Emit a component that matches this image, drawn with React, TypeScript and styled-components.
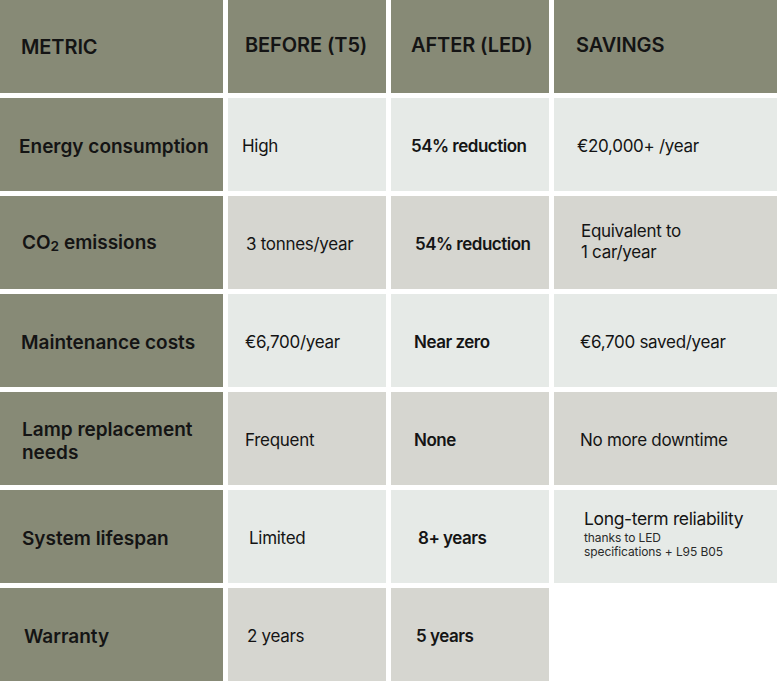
import React from 'react'
import styled, { createGlobalStyle } from 'styled-components'

const Colors = {
  Olive: '#878a76',
  Light: '#e6eae7',
  Gray: '#d6d6d0',
  Ink: '#141414',
}

type Tone = 'head' | 'light' | 'gray'

const toneColor: Record<Tone, string> = {
  head: Colors.Olive,
  light: Colors.Light,
  gray: Colors.Gray,
}

const GlobalStyle = createGlobalStyle`
  body {
    margin: 0;
    background: #ffffff;
    font-family: Inter, "Liberation Sans", sans-serif;
    color: ${Colors.Ink};
  }
`

const Table = styled.div`
  display: grid;
  grid-template-columns: 223px 158px 158px 223px;
  grid-auto-rows: 93px;
  column-gap: 5px;
  row-gap: 5px;
  width: 777px;
`

const Cell = styled.div<{ $tone: Tone; $pl: number; $pt?: number; $strong?: boolean }>`
  display: flex;
  align-items: center;
  box-sizing: border-box;
  padding-left: ${(p) => p.$pl}px;
  padding-top: ${(p) => p.$pt ?? 4}px;
  padding-right: 8px;
  background: ${(p) => toneColor[p.$tone]};
  font-size: 17px;
  line-height: 21px;
  font-weight: ${(p) => (p.$strong ? 600 : 400)};
  letter-spacing: ${(p) => (p.$strong ? '-0.5px' : '-0.3px')};
`

const HeadCell = styled(Cell).attrs({ $tone: 'head' as Tone })`
  font-size: 20px;
  font-weight: 600;
  letter-spacing: -0.1px;
  padding-bottom: 2px;
`

const LabelCell = styled(Cell).attrs({ $tone: 'head' as Tone, $strong: true })`
  font-size: 19px;
  line-height: 23px;
  letter-spacing: 0;
`

const Empty = styled.div`
  background: transparent;
`

const Text = styled.span``

const Sub = styled.span`
  font-size: 0.72em;
  vertical-align: -0.15em;
`

const Stack = styled.div<{ $lift: number; $gap: number }>`
  display: flex;
  flex-direction: column;
  gap: ${(p) => p.$gap}px;
  margin-bottom: ${(p) => p.$lift}px;
`

const Lead = styled.span`
  font-size: 17.5px;
  line-height: 21px;
  letter-spacing: -0.35px;
`

const Fine = styled.span`
  font-size: 12px;
  line-height: 14px;
  letter-spacing: -0.1px;
  color: #2a2a2a;
`

interface Row {
  label: React.ReactNode
  before: string
  after: string
  savings?: React.ReactNode
  tone: Tone
  inset: [number, number, number, number]
}

const rows: Row[] = [
  {
    label: 'Energy consumption',
    before: 'High',
    after: '54% reduction',
    savings: '€20,000+ /year',
    tone: 'light',
    inset: [19, 14, 20, 23],
  },
  {
    label: (
      <>
        CO<Sub>2</Sub> emissions
      </>
    ),
    before: '3 tonnes/year',
    after: '54% reduction',
    savings: (
      <Stack $lift={6} $gap={0}>
        <span>Equivalent to</span>
        <span>1 car/year</span>
      </Stack>
    ),
    tone: 'gray',
    inset: [22, 18, 24, 27],
  },
  {
    label: 'Maintenance costs',
    before: '€6,700/year',
    after: 'Near zero',
    savings: '€6,700 saved/year',
    tone: 'light',
    inset: [21, 17, 23, 26],
  },
  {
    label: (
      <>
        Lamp replacement
        <br />
        needs
      </>
    ),
    before: 'Frequent',
    after: 'None',
    savings: 'No more downtime',
    tone: 'gray',
    inset: [22, 17, 23, 26],
  },
  {
    label: 'System lifespan',
    before: 'Limited',
    after: '8+ years',
    savings: (
      <Stack $lift={11} $gap={2}>
        <Lead>Long-term reliability</Lead>
        <Fine>
          thanks to LED
          <br />
          specifications + L95 B05
        </Fine>
      </Stack>
    ),
    tone: 'light',
    inset: [22, 21, 27, 30],
  },
  {
    label: 'Warranty',
    before: '2 years',
    after: '5 years',
    tone: 'gray',
    inset: [24, 19, 25, 0],
  },
]

export default function App() {
  return (
    <>
      <GlobalStyle />
      <Table>
        <HeadCell $pl={21} $pt={4}>METRIC</HeadCell>
        <HeadCell $pl={17} $pt={0}>BEFORE (T5)</HeadCell>
        <HeadCell $pl={20} $pt={0}>AFTER (LED)</HeadCell>
        <HeadCell $pl={22} $pt={0}>SAVINGS</HeadCell>
        {rows.map((row, i) => (
          <React.Fragment key={i}>
            <LabelCell $pl={row.inset[0]}>
              <Text>{row.label}</Text>
            </LabelCell>
            <Cell $tone={row.tone} $pl={row.inset[1]}>
              <Text>{row.before}</Text>
            </Cell>
            <Cell $tone={row.tone} $pl={row.inset[2]} $strong>
              <Text>{row.after}</Text>
            </Cell>
            {row.savings ? (
              <Cell $tone={row.tone} $pl={row.inset[3]}>
                {row.savings}
              </Cell>
            ) : (
              <Empty />
            )}
          </React.Fragment>
        ))}
      </Table>
    </>
  )
}
